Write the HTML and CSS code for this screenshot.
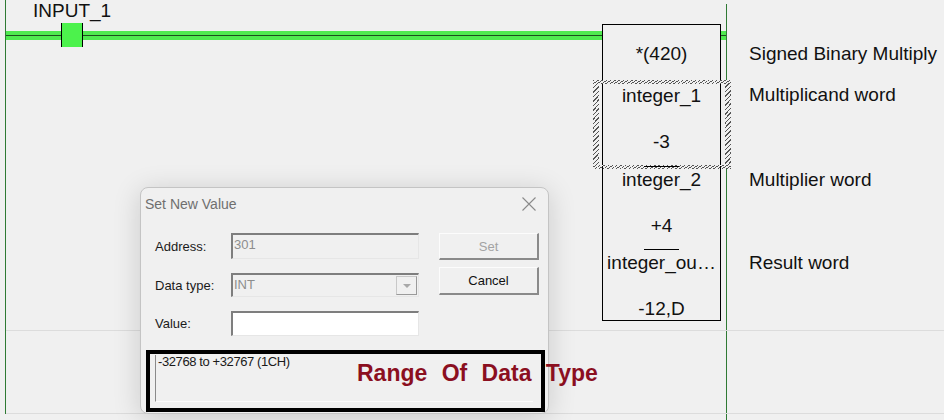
FILE: index.html
```html
<!DOCTYPE html>
<html lang="en">
<head>
    <meta charset="UTF-8">
    <title>Ladder - Set New Value</title>
    <link rel="stylesheet" href="styles.css">
</head>
<body>
    <div class="canvas">
        <!-- rails and grid -->
        <div class="rail rail-left"></div>
        <div class="rail rail-right"></div>
        <div class="gridline gridline-a"></div>
        <div class="gridline gridline-b"></div>

        <!-- rung 1 -->
        <div class="tag">INPUT_1</div>
        <div class="wire wire-main"></div>
        <div class="wire wire-stub"></div>
        <div class="contact"></div>

        <div class="instr">
            <div class="cell head">*(420)</div>
            <div class="note head">Signed Binary Multiply</div>

            <div class="cell op op-first selected">
                <div class="name">integer_1</div>
                <div class="value">-3</div>
            </div>
            <div class="note">Multiplicand word</div>

            <div class="cell op">
                <div class="sep"></div>
                <div class="name">integer_2</div>
                <div class="value">+4</div>
            </div>
            <div class="note">Multiplier word</div>

            <div class="cell op op-last">
                <div class="sep"></div>
                <div class="name">integer_ou…</div>
                <div class="value">-12,D</div>
            </div>
            <div class="note">Result word</div>
        </div>

        <!-- Set New Value dialog -->
        <div class="dialog">
            <div class="titlebar">
                <span class="title">Set New Value</span>
                <svg class="close" width="16" height="14" viewBox="0 0 16 14">
                    <path d="M1.5 0.5 L14.5 13.5 M14.5 0.5 L1.5 13.5" stroke="#8a8a8a" stroke-width="1.1" fill="none"/>
                </svg>
            </div>
            <div class="dlg-body">
                <div class="fields">
                    <label>Address:</label>
                    <div class="field field-disabled">301</div>
                    <label>Data type:</label>
                    <div class="field field-disabled field-select">
                        <span>INT</span>
                        <span class="drop">
                            <svg width="10" height="6" viewBox="0 0 10 6"><path d="M1 1 L9 1 L5 5 Z" fill="#a8a8a8"/></svg>
                        </span>
                    </div>
                    <label>Value:</label>
                    <div class="field field-white"></div>
                </div>
                <div class="buttons">
                    <button class="btn btn-disabled">Set</button>
                    <button class="btn">Cancel</button>
                </div>
            </div>
            <div class="range-box">
                <div class="range-text">-32768 to +32767 (1CH)</div>
                <div class="range-label">Range Of Data Type</div>
            </div>
        </div>
    </div>
</body>
</html>
```

FILE: styles.css
```css
/* Page */
body {
    margin: 0;
    background: #f0f0f0;
    font-family: "Liberation Sans", Arial, sans-serif;
    color: #111;
}

.canvas {
    position: relative;
    width: 944px;
    height: 420px;
    overflow: hidden;
}

/* Rails and grid lines */
.rail {
    position: absolute;
    width: 1px;
    background: #2f7a34;
}

.rail-left {
    left: 5px;
    top: 0;
    height: 414px;
}

.rail-right {
    left: 726px;
    top: 4px;
    bottom: 0;
}

.gridline {
    position: absolute;
    left: 6px;
    right: 0;
    height: 1px;
    background: #dcdcdc;
}

.gridline-a { top: 330px; }
.gridline-b { top: 413px; }

/* Rung */
.tag {
    position: absolute;
    left: 33px;
    top: 0;
    font-size: 19px;
    line-height: 22px;
}

.wire {
    position: absolute;
    top: 31px;
    height: 9px;
    background: linear-gradient(#4fe94f 0 4px, #1d4d1d 4px 5px, #4fe94f 5px);
}

.wire-main {
    left: 6px;
    width: 596px;
}

.wire-stub {
    left: 721px;
    width: 5px;
}

.contact {
    position: absolute;
    left: 61px;
    top: 23px;
    width: 20px;
    height: 24px;
    background: #4cf24c;
    border-left: 1px solid #000;
    border-right: 1px solid #000;
}

/* Instruction block */
.instr {
    position: absolute;
    left: 602px;
    top: 24px;
    display: grid;
    grid-template-columns: 119px auto;
    grid-template-rows: 57px 85px 83px 72px;
    column-gap: 28px;
    font-size: 19px;
}

.cell {
    position: relative;
    box-sizing: border-box;
    border-left: 1px solid #000;
    border-right: 1px solid #000;
    text-align: center;
    white-space: nowrap;
}

.head {
    padding-top: 16px;
    line-height: 28px;
}

.cell.head {
    border-top: 1px solid #000;
    padding-top: 15px;
}

.note {
    line-height: 28px;
    white-space: nowrap;
}

.op .name {
    line-height: 28px;
}

.op .value {
    line-height: 28px;
    margin-top: 18px;
}

.op-first {
    border-top: 1px solid #000;
}

.op-last {
    border-bottom: 1px solid #000;
}

.sep {
    width: 35px;
    height: 1px;
    margin: 0 auto -1px;
    background: #000;
}

.selected::after {
    content: "";
    position: absolute;
    top: -2px;
    left: -10px;
    right: -11px;
    bottom: -3px;
    border-style: solid;
    border-width: 4px 6px;
    border-image: repeating-linear-gradient(-45deg, #555 0 1px, #f0f0f0 1px 3px) 6;
}

/* Dialog */
.dialog {
    position: absolute;
    left: 140px;
    top: 187px;
    width: 409px;
    height: 227px;
    box-sizing: border-box;
    border: 1px solid #c4c4c4;
    border-radius: 8px;
    background: #f0f0f0;
    box-shadow: 0 4px 28px rgba(0, 0, 0, 0.16);
    font-size: 13px;
}

.titlebar {
    display: flex;
    align-items: center;
    justify-content: space-between;
    height: 32px;
    padding: 0 11px 0 4px;
}

.title {
    font-size: 14px;
    color: #6f6f6f;
}

.dlg-body {
    display: flex;
    padding: 13px 9px 0 14px;
}

.fields {
    display: grid;
    grid-template-columns: 76px 188px;
    grid-template-rows: 26px 24px 25px;
    row-gap: 14px;
    align-items: center;
}

.fields label {
    color: #1a1a1a;
}

.field {
    height: 100%;
    box-sizing: border-box;
    border: 1px solid #e6e6e6;
    border-top: 2px solid #7e7e7e;
    border-left: 2px solid #7e7e7e;
    padding-left: 1px;
    line-height: 20px;
}

.field-disabled {
    background: #f0f0f0;
    color: #8d8d8d;
}

.field-white {
    background: #fff;
}

.field-select {
    display: flex;
    justify-content: space-between;
    line-height: 19px;
}

.drop {
    display: flex;
    align-items: center;
    justify-content: center;
    width: 19px;
    margin: 1px 1px 1px 0;
    border: 1px solid #c8c8c8;
    border-right-color: #9a9a9a;
    border-bottom-color: #9a9a9a;
}

.buttons {
    display: flex;
    flex-direction: column;
    gap: 7px;
    margin-left: 20px;
}

.btn {
    width: 100px;
    height: 27px;
    font-family: "Liberation Sans", Arial, sans-serif;
    font-size: 13px;
    color: #111;
    background: #f0f0f0;
    border: 1px solid #fcfcfc;
    border-right: 2px solid #8a8a8a;
    border-bottom: 2px solid #8a8a8a;
    padding: 0;
}

.btn + .btn {
    height: 28px;
}

.btn-disabled {
    color: #a3a3a3;
}

/* Range info */
.range-box {
    position: relative;
    margin: 14px 0 0 5px;
    width: 399px;
    height: 62px;
    box-sizing: border-box;
    border: 4px solid #000;
    padding: 1px 8px 6px 5px;
}

.range-text {
    height: 100%;
    box-sizing: border-box;
    border-left: 1px solid #8a8a8a;
    border-bottom: 1px solid #fbfbfb;
    padding-left: 2px;
    font-size: 13px;
    letter-spacing: -0.4px;
    line-height: 14px;
    color: #1a1a1a;
}

.range-label {
    position: absolute;
    left: 207px;
    top: 5px;
    font-size: 23px;
    font-weight: bold;
    line-height: 28px;
    word-spacing: 8px;
    color: #8b0f1f;
    white-space: nowrap;
}
```
